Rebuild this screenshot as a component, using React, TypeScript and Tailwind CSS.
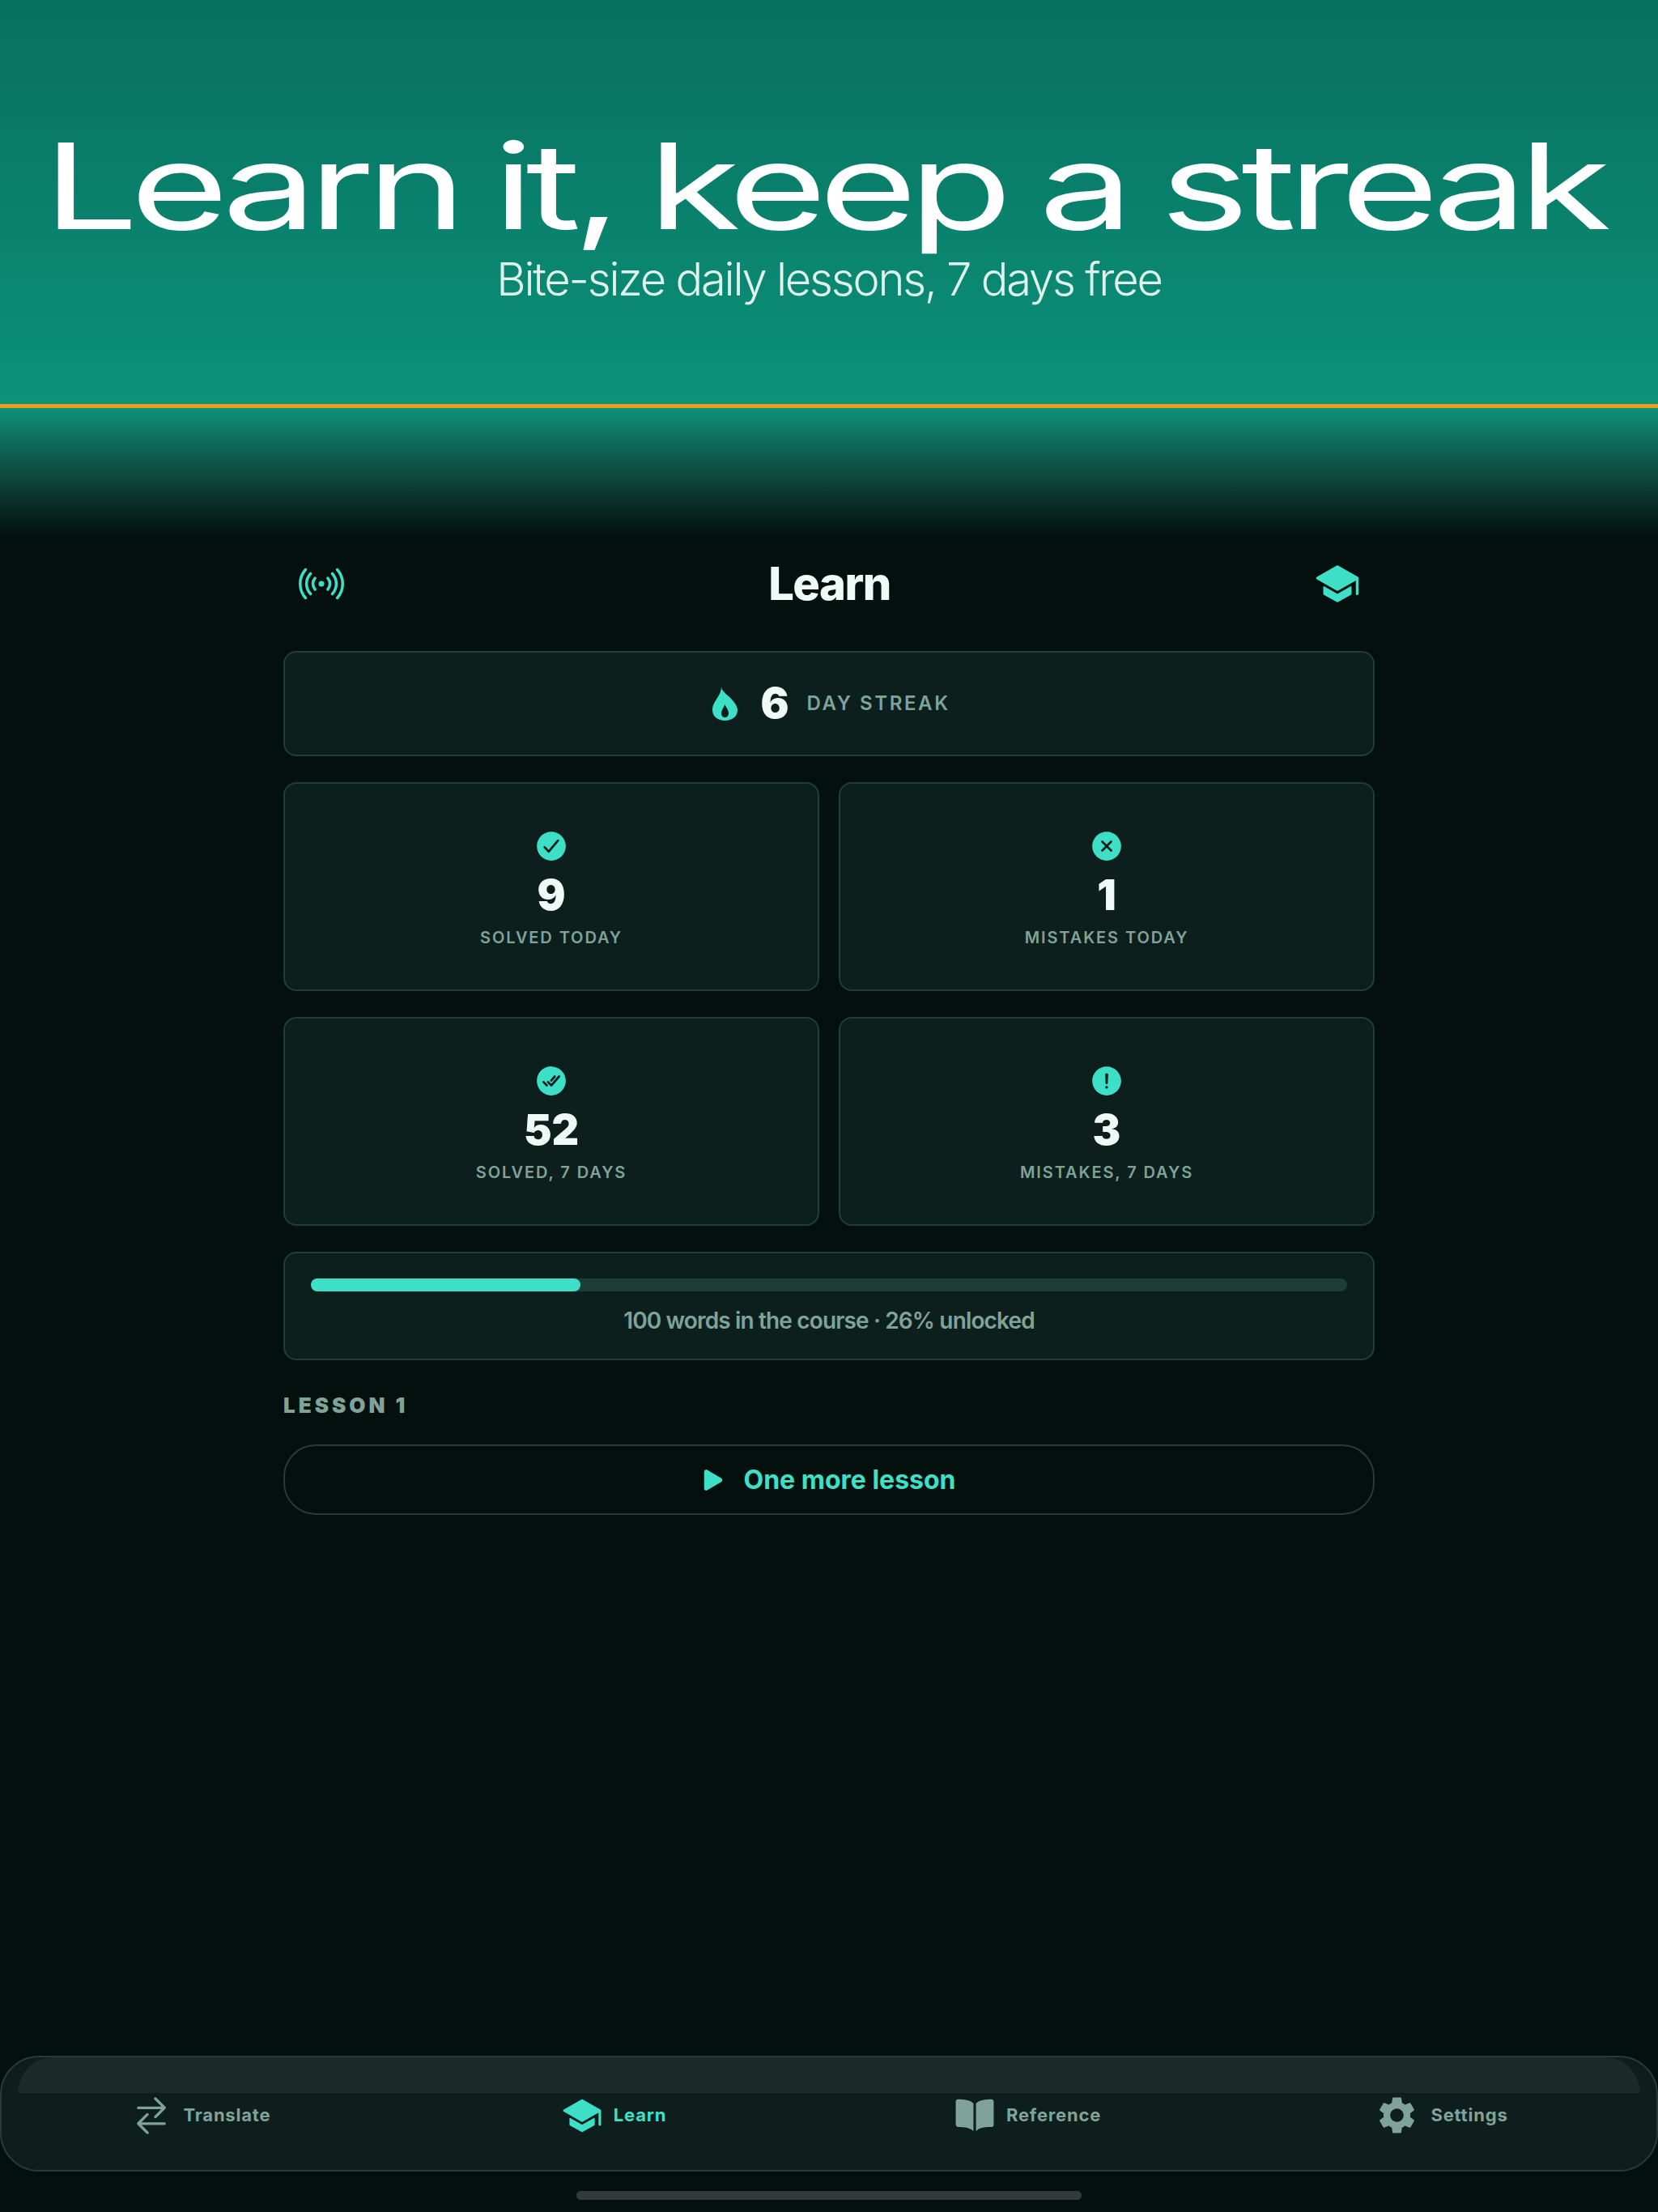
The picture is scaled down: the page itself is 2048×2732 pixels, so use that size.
import type { ReactNode } from "react";
import { MdSettings } from "react-icons/md";
import {
  IoAlertCircle,
  IoBook,
  IoCheckmarkCircle,
  IoCheckmarkDoneCircle,
  IoCloseCircle,
  IoPlay,
  IoRadioOutline,
  IoSchool,
  IoSwapHorizontalOutline,
} from "react-icons/io5";

const font = { fontFamily: "Inter, 'Noto Sans', sans-serif" };

const stats = [
  { icon: <IoCheckmarkCircle size={44} />, value: "9", label: "SOLVED TODAY" },
  { icon: <IoCloseCircle size={44} />, value: "1", label: "MISTAKES TODAY" },
  { icon: <IoCheckmarkDoneCircle size={44} />, value: "52", label: "SOLVED, 7 DAYS" },
  { icon: <IoAlertCircle size={44} />, value: "3", label: "MISTAKES, 7 DAYS" },
];

const tabs: { icon: ReactNode; label: string; active?: boolean }[] = [
  { icon: <IoSwapHorizontalOutline size={52} />, label: "Translate" },
  { icon: <IoSchool size={50} />, label: "Learn", active: true },
  { icon: <IoBook size={50} />, label: "Reference" },
  { icon: <MdSettings size={55} />, label: "Settings" },
];

const Flame = () => (
  <svg width="31" height="42" viewBox="0 0 31 42" className="text-[#3de0c7]">
    <path
      fill="currentColor"
      fillRule="evenodd"
      d="M11 0C11 6 19 10 24 16C28 20.5 31 25 31 29C31 37 24 42 15.5 42C7 42 0 37 0 29C0 23 3 18.5 6 14C9 9.5 11 5 11 0ZM15.5 22C14 26 11 29 11 33C11 36 13 38 15.5 38C18 38 20 36 20 33C20 29 17 26 15.5 22Z"
    />
  </svg>
);

const StatCard = ({ icon, value, label }: { icon: ReactNode; value: string; label: string }) => (
  <div className="h-[258px] rounded-2xl border-2 border-[#1e3f39] bg-[#0d1f1d] flex flex-col items-center pt-[55px]">
    <div className="text-[#3de0c7] h-[44px] flex items-center">{icon}</div>
    <div className="text-[52px] leading-[60px] font-black text-[#eff9f5] mt-[9px]">{value}</div>
    <div className="text-[20px] leading-[24px] font-semibold tracking-[1.9px] text-[#7fa399] mt-[10px]">{label}</div>
  </div>
);

export default function App() {
  return (
    <div style={font} className="min-h-[2732px] bg-[#04100e] flex flex-col overflow-hidden">
      {/* promo banner */}
      <div className="h-[499px] bg-gradient-to-b from-[#07705e] to-[#0c917a] flex flex-col items-center pt-[150px]">
        <h1 className="text-[147px] leading-[160px] font-normal tracking-[-7px] [word-spacing:-4px] text-white whitespace-nowrap scale-x-[1.415] mr-[14px]">
          Learn it, keep a streak
        </h1>
        <p className="text-[56px] leading-[68px] font-light tracking-[-2.2px] text-[#dff3ec] mt-[1px]">
          Bite-size daily lessons, 7 days free
        </p>
      </div>
      <div className="h-[5px] bg-[#e99b1d]" />
      <div className="h-[160px] bg-gradient-to-b from-[#0c917a] to-[#04100e]" />

      <main className="w-[1348px] mx-auto flex-1">
        <header className="h-[112px] mb-[28px] flex items-center justify-between pl-[19px] pr-[18px] pt-[2px]">
          <IoRadioOutline size={56} className="text-[#3de0c7]" />
          <h2 className="text-[56px] font-extrabold tracking-[-1.5px] text-[#eff9f5]">Learn</h2>
          <IoSchool size={56} className="text-[#3de0c7]" />
        </header>

        <div className="h-[130px] rounded-2xl border-2 border-[#1e3f39] bg-[#0d1f1d] flex items-center justify-center pl-[6px] mb-[32px]">
          <Flame />
          <span className="text-[52px] font-black text-[#eff9f5] ml-[28px]">6</span>
          <span className="text-[24px] font-semibold tracking-[2.6px] text-[#7fa399] ml-[22px]">DAY STREAK</span>
        </div>

        <div className="grid grid-cols-2 gap-x-[24px] gap-y-[32px] mb-[32px]">
          {stats.map((s) => (
            <StatCard key={s.label} {...s} />
          ))}
        </div>

        <div className="h-[134px] rounded-2xl border-2 border-[#1e3f39] bg-[#0d1f1d] px-[32px] pt-[31px]">
          <div className="h-[16px] rounded-full bg-[#1d3d37]">
            <div className="h-full rounded-full bg-[#3de0c7]" style={{ width: "26%" }} />
          </div>
          <p className="text-[28px] leading-[36px] font-semibold tracking-[-0.85px] text-[#7fa399] text-center mt-[18px]">
            100 words in the course · 26% unlocked
          </p>
        </div>

        <div className="text-[26px] leading-[32px] font-black tracking-[4px] text-[#7fa399] mt-[40px] mb-[32px]">LESSON 1</div>

        <button className="w-full h-[87px] rounded-[40px] border-2 border-[#2a3a37] flex items-center justify-center gap-[19px] pr-[4px] text-[#3de0c7]">
          <IoPlay size={36} />
          <span className="text-[32px] font-bold">One more lesson</span>
        </button>
      </main>

      <nav className="h-[143px] rounded-[48px] border-2 border-[#2a3a37] bg-[#0e1e1d]">
        <div className="h-[44px] mx-[20px] rounded-t-[44px] bg-[#1b2b2a]" />
        <div className="grid grid-cols-4 h-[50px]">
          {tabs.map((t) => (
            <div key={t.label} className={`flex items-center justify-center gap-[14px] pr-[20px] ${t.active ? "text-[#3de0c7]" : "text-[#7fa399]"}`}>
              {t.icon}
              <span className="text-[22px] font-bold tracking-[0.8px]">{t.label}</span>
            </div>
          ))}
        </div>
      </nav>
      <div className="h-[50px] pt-[24px]">
        <div className="w-[624px] h-[11px] rounded-full bg-[#333b3a] mx-auto" />
      </div>
    </div>
  );
}
